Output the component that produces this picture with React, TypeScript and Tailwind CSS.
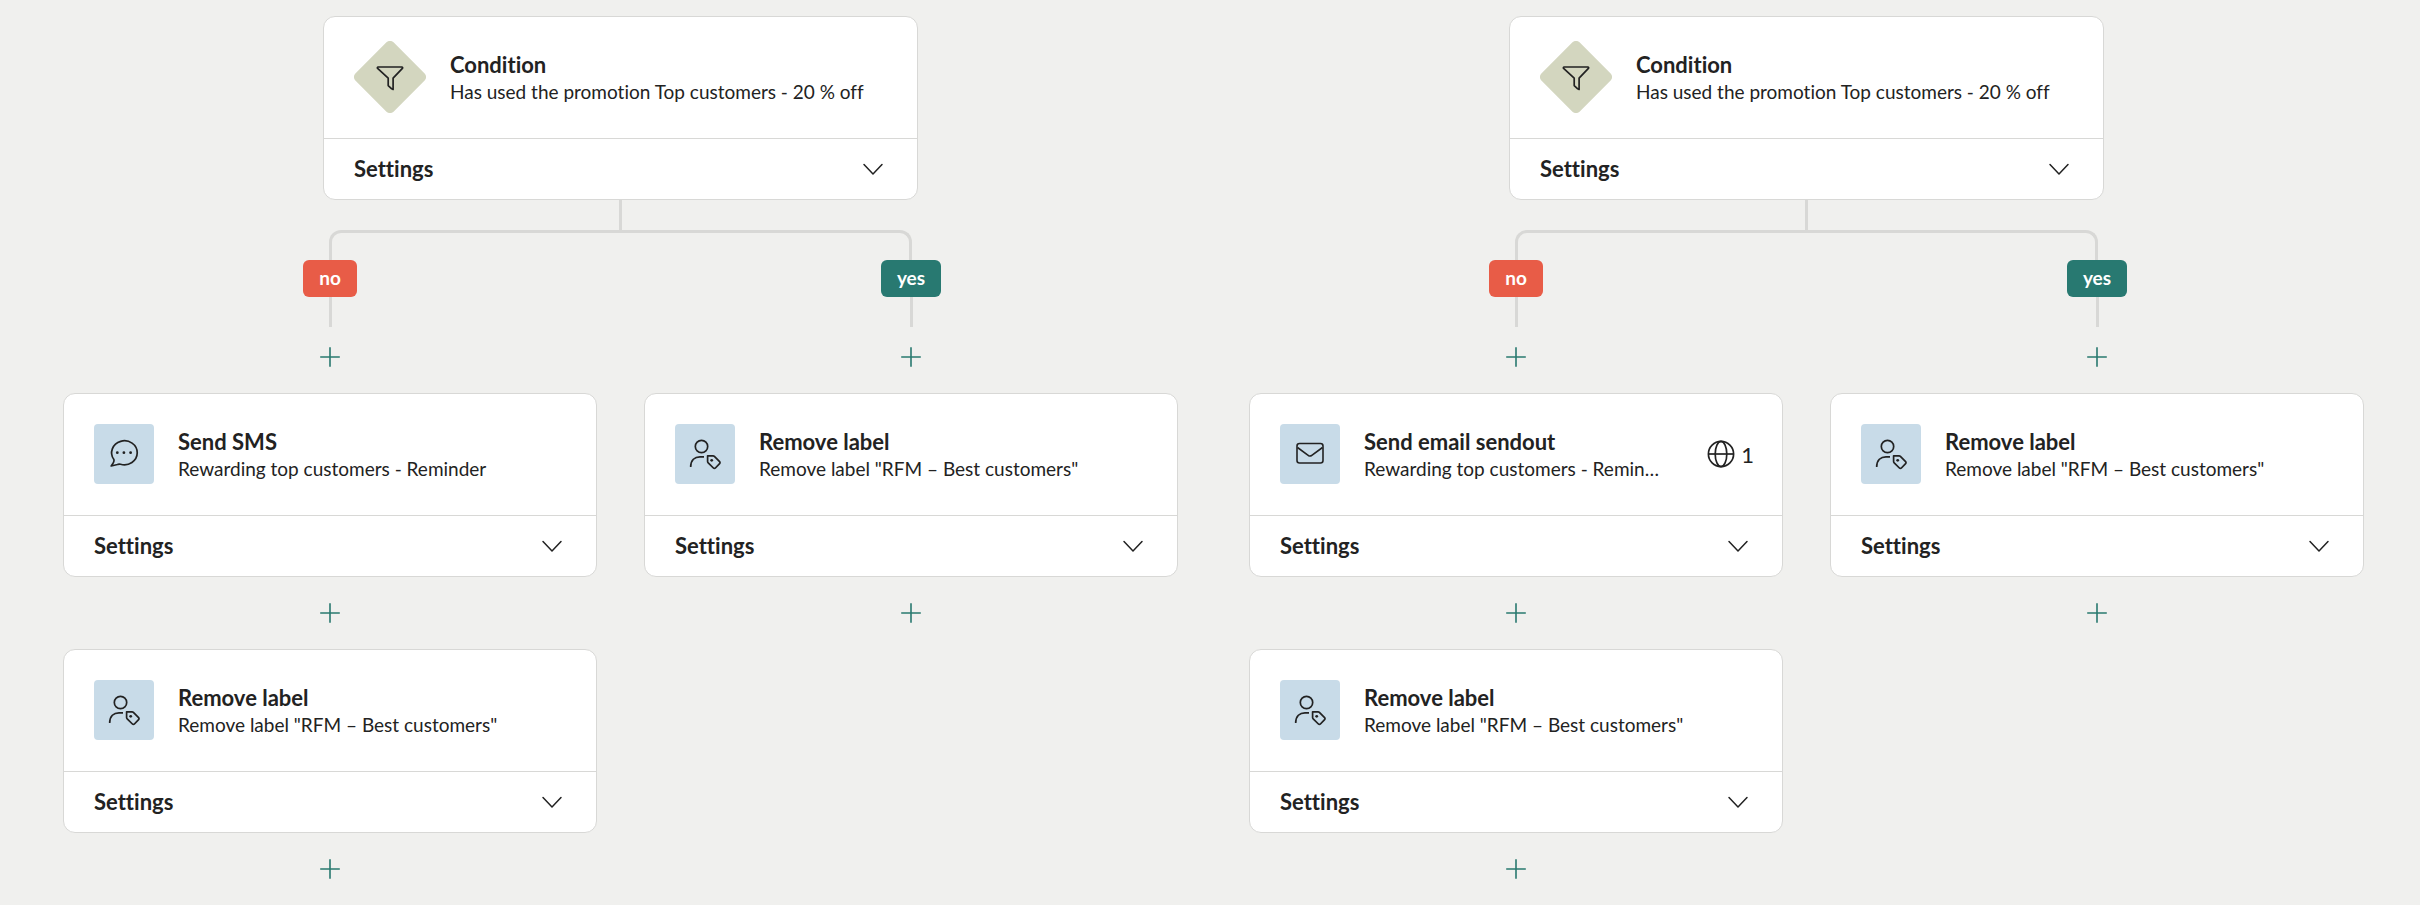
import type { ReactNode } from "react";

type StepProps = {
  icon: ReactNode;
  title: string;
  text: string;
  languages?: number;
};

const ChevronIcon = () => (
  <svg
    className="w-7 h-7 shrink-0"
    fill="none"
    stroke="currentColor"
    strokeWidth={1.5}
    strokeLinecap="round"
    strokeLinejoin="round"
    viewBox="0 0 28 28"
    aria-hidden="true"
  >
    <path d="M5 10.5l9 9.5 9-9.5" />
  </svg>
);

const PlusIcon = () => (
  <svg
    className="w-6 h-6"
    fill="none"
    stroke="currentColor"
    strokeWidth={1.6}
    viewBox="0 0 24 24"
    aria-hidden="true"
  >
    <path d="M12 2.2v19.6M2.2 12h19.6" />
  </svg>
);

const GlobeIcon = () => (
  <svg
    className="w-7 h-7"
    fill="none"
    stroke="currentColor"
    strokeWidth={1.7}
    viewBox="0 0 28 28"
    aria-hidden="true"
  >
    <circle cx="14" cy="14" r="12.6" />
    <ellipse cx="14" cy="14" rx="5.8" ry="12.6" />
    <path d="M1.4 14h25.2" />
  </svg>
);

const SmsIcon = () => (
  <svg
    className="w-8 h-8"
    fill="none"
    stroke="currentColor"
    strokeWidth={1.7}
    strokeLinejoin="round"
    viewBox="0 0 32 32"
    aria-hidden="true"
  >
    <path d="M5.9 21.6a12.8 12 0 1 1 6.6 4.6c-1.2-.3-2 0-3 .3l-6.3 1.5c1.6-2 3.4-4 2.7-6.4z" />
    <g fill="currentColor" stroke="none">
      <circle cx="9.3" cy="14.7" r="1.4" />
      <circle cx="15.9" cy="14.7" r="1.4" />
      <circle cx="22.6" cy="14.7" r="1.4" />
    </g>
  </svg>
);

const MailIcon = () => (
  <svg
    className="w-8 h-8"
    fill="none"
    stroke="currentColor"
    strokeWidth={1.6}
    strokeLinejoin="round"
    viewBox="0 0 32 32"
    aria-hidden="true"
  >
    <rect x="3" y="5.5" width="26" height="19.5" rx="2.5" />
    <path d="M3.5 9.5l10.7 7.8a3 3 0 0 0 3.6 0l10.7-7.8" />
  </svg>
);

const LabelIcon = () => (
  <svg
    className="w-8 h-8"
    fill="none"
    stroke="currentColor"
    strokeWidth={1.7}
    strokeLinejoin="round"
    viewBox="0 0 32 32"
    aria-hidden="true"
  >
    <circle cx="12.5" cy="8.5" r="6.2" />
    <path d="M1.7 29c0-7 4-10.2 9.3-10.2h4" />
    <path d="M18.6 17.8h5.4a2 2 0 0 1 1.4.6l5.2 5.2a1.4 1.4 0 0 1 0 2l-4.2 4.4a1.4 1.4 0 0 1-2 0l-5.2-5.2a2 2 0 0 1-.6-1.4z" />
    <circle cx="22.7" cy="22.3" r="1.4" fill="currentColor" stroke="none" />
  </svg>
);

const ConditionIcon = () => (
  <svg className="w-[72px] h-[72px] shrink-0" viewBox="0 0 72 72" aria-hidden="true">
    <rect
      x="9"
      y="9"
      width="54"
      height="54"
      rx="5"
      fill="#d3d6bf"
      transform="rotate(45 36 36)"
    />
    <path
      d="M24.2 26h23.6a.8.8 0 0 1 .6 1.4L39.1 37.2v11.2l-1.4-.6-3.5-3.2V37.2L23.6 27.4a.8.8 0 0 1 .6-1.4z"
      fill="none"
      stroke="currentColor"
      strokeWidth={1.7}
      strokeLinejoin="round"
    />
  </svg>
);

const ActionIcon = ({ children }: { children: ReactNode }) => (
  <div className="flex items-center justify-center w-[60px] h-[60px] shrink-0 rounded bg-[#c8dbe8]">
    {children}
  </div>
);

const StepCard = ({ icon, title, text, languages }: StepProps) => (
  <article className="bg-white border border-[#d8d8d6] rounded-xl">
    <div className="flex items-center gap-6 h-[121px] pl-[30px] pr-7 pb-px">
      {icon}
      <div className="flex-1 min-w-0 pt-0.5">
        <h2 className="text-[22px]/[27px] font-bold">{title}</h2>
        <p className="text-[19px]/[27px] truncate">{text}</p>
      </div>
      {languages && (
        <div className="flex items-center gap-1.5 ml-5 text-[22px]/[27px]">
          <GlobeIcon />
          <span>{languages}</span>
        </div>
      )}
    </div>
    <button
      type="button"
      className="flex items-center justify-between w-full h-[61px] px-[30px] pb-0.5 border-t border-[#d8d8d6] text-[22px]/[27px] font-bold"
    >
      Settings
      <ChevronIcon />
    </button>
  </article>
);

const AddStep = ({ className = "pt-6" }: { className?: string }) => (
  <div className={`flex justify-center pb-6 ${className}`}>
    <button type="button" aria-label="Add step" className="text-[#28796f]">
      <PlusIcon />
    </button>
  </div>
);

const Branch = ({
  label,
  color,
  steps,
}: {
  label: string;
  color: string;
  steps: StepProps[];
}) => (
  <div className="min-w-0">
    <div className="flex flex-col items-center">
      <span
        className={`flex items-center h-[37px] px-4 pb-0.5 rounded-md text-[19px]/[27px] font-bold text-white ${color}`}
      >
        {label}
      </span>
      <div className="w-[3px] h-[30px] bg-[#d8d8d6]" />
    </div>
    <AddStep className="pt-[18px]" />
    {steps.map((step) => (
      <div key={step.title}>
        <StepCard {...step} />
        <AddStep />
      </div>
    ))}
  </div>
);

const Flow = ({ firstStep }: { firstStep: StepProps }) => (
  <section>
    <div className="max-w-[595px] mx-auto">
      <StepCard
        icon={<ConditionIcon />}
        title="Condition"
        text="Has used the promotion Top customers - 20 % off"
      />
    </div>
    <div className="w-[3px] h-[30px] mx-auto bg-[#d8d8d6]" />
    <div className="h-[30px] mx-[calc(25%-13px)] border-x-3 border-t-3 border-[#d8d8d6] rounded-t-xl" />
    <div className="grid grid-cols-2 gap-[47px]">
      <Branch label="no" color="bg-[#e85c47]" steps={[firstStep, removeLabel]} />
      <Branch label="yes" color="bg-[#287971]" steps={[removeLabel]} />
    </div>
  </section>
);

const removeLabel: StepProps = {
  icon: (
    <ActionIcon>
      <LabelIcon />
    </ActionIcon>
  ),
  title: "Remove label",
  text: 'Remove label "RFM – Best customers"',
};

const sendSms: StepProps = {
  icon: (
    <ActionIcon>
      <SmsIcon />
    </ActionIcon>
  ),
  title: "Send SMS",
  text: "Rewarding top customers - Reminder",
};

const sendEmail: StepProps = {
  icon: (
    <ActionIcon>
      <MailIcon />
    </ActionIcon>
  ),
  title: "Send email sendout",
  text: "Rewarding top customers - Reminder",
  languages: 1,
};

const App = () => {
  return (
    <main className="min-h-screen grid grid-cols-2 gap-[71px] pt-4 pl-[63px] pr-14 bg-[#f0f0ee] text-[#222] font-['Lato',sans-serif] [font-variant-ligatures:none]">
      <Flow firstStep={sendSms} />
      <Flow firstStep={sendEmail} />
    </main>
  );
};

export default App;
